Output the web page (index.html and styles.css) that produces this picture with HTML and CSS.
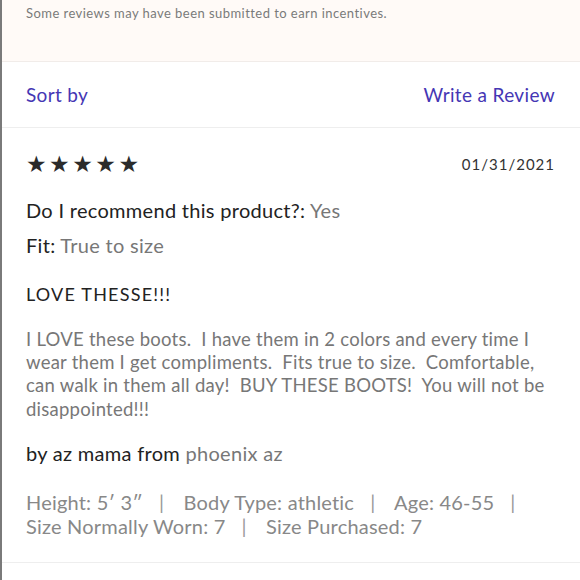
FILE: index.html
```html
<!DOCTYPE html>
<html>
<head>
<meta charset="utf-8">
<link rel="stylesheet" href="styles.css">
</head>
<body>
<div class="page">
  <div class="notice">Some reviews may have been submitted to earn incentives.</div>
  <div class="toolbar">
    <a class="link">Sort by</a>
    <a class="link">Write a Review</a>
  </div>
  <div class="review">
    <div class="review-head">
      <div class="stars">★★★★★</div>
      <div class="date">01/31/2021</div>
    </div>
    <div class="attr attr-rec"><span class="label">Do I recommend this product?:</span> <span class="value">Yes</span></div>
    <div class="attr attr-fit"><span class="label">Fit:</span> <span class="value">True to size</span></div>
    <div class="title">LOVE THESSE!!!</div>
    <p class="body">I LOVE these boots.&nbsp; I have them in 2 colors and every time I wear them I get compliments.&nbsp; Fits true to size.&nbsp; Comfortable, can walk in them all day!&nbsp; BUY THESE BOOTS!&nbsp; You will not be disappointed!!!</p>
    <div class="author"><span class="label">by az mama from</span> <span class="value">phoenix az</span></div>
    <div class="meta"><span class="item">Height: 5′ 3″<span class="sep">|</span></span> <span class="item">Body Type: athletic<span class="sep">|</span></span> <span class="item">Age: 46-55<span class="sep">|</span></span> <span class="item">Size Normally Worn: 7<span class="sep">|</span></span> <span class="item">Size Purchased: 7</span></div>
  </div>
</div>
</body>
</html>
```
FILE: styles.css
```css
html, body {
  margin: 0;
  padding: 0;
  background: #fff;
}
.page {
  width: 578px;
  height: 580px;
  border-left: 2px solid #7a7a7a;
  font-family: "Lato", "Liberation Sans", sans-serif;
  overflow: hidden;
}
.notice {
  background: #fffaf7;
  height: 62px;
  padding: 5px 0 0 24px;
  box-sizing: border-box;
  font-size: 13px;
  letter-spacing: 0.45px;
  color: #7a7a7a;
  border-bottom: 1px solid #f1ece9;
}
.toolbar {
  display: flex;
  justify-content: space-between;
  align-items: center;
  height: 65px;
  padding: 0 25px 0 24px;
  border-bottom: 1px solid #eeeeee;
}
.link {
  color: #4536b4;
  font-size: 19px;
  letter-spacing: 0.35px;
}
.review {
  padding: 0 25px 0 24px;
  height: 434px;
  border-bottom: 1px solid #eeeeee;
}
.review-head {
  display: flex;
  justify-content: space-between;
  align-items: center;
  height: 72px;
}
.stars {
  font-family: "DejaVu Sans", sans-serif;
  font-size: 23px;
  letter-spacing: 2.5px;
  color: #2b2b2b;
}
.date {
  font-size: 15px;
  letter-spacing: 1px;
  color: #333;
}
.attr, .author {
  font-size: 20px;
  letter-spacing: 0.3px;
}
.label {
  color: #222;
}
.value {
  color: #777;
}
.attr-rec {
  margin-top: -3px;
  line-height: 26px;
}
.attr-fit {
  margin-top: 9px;
  line-height: 26px;
}
.title {
  margin-top: 24px;
  font-size: 18px;
  letter-spacing: 1.2px;
  line-height: 24px;
  color: #222;
}
.body {
  margin: 22px 0 0;
  font-size: 18.5px;
  letter-spacing: 0.25px;
  line-height: 23.2px;
  color: #777;
}
.author {
  margin-top: 19px;
  line-height: 26px;
}
.meta {
  margin-top: 24px;
  font-size: 20px;
  letter-spacing: 0.2px;
  line-height: 24px;
  color: #888;
}
.item {
  white-space: nowrap;
}
.sep {
  margin: 0 14px 0 16px;
  color: #999;
}
```
